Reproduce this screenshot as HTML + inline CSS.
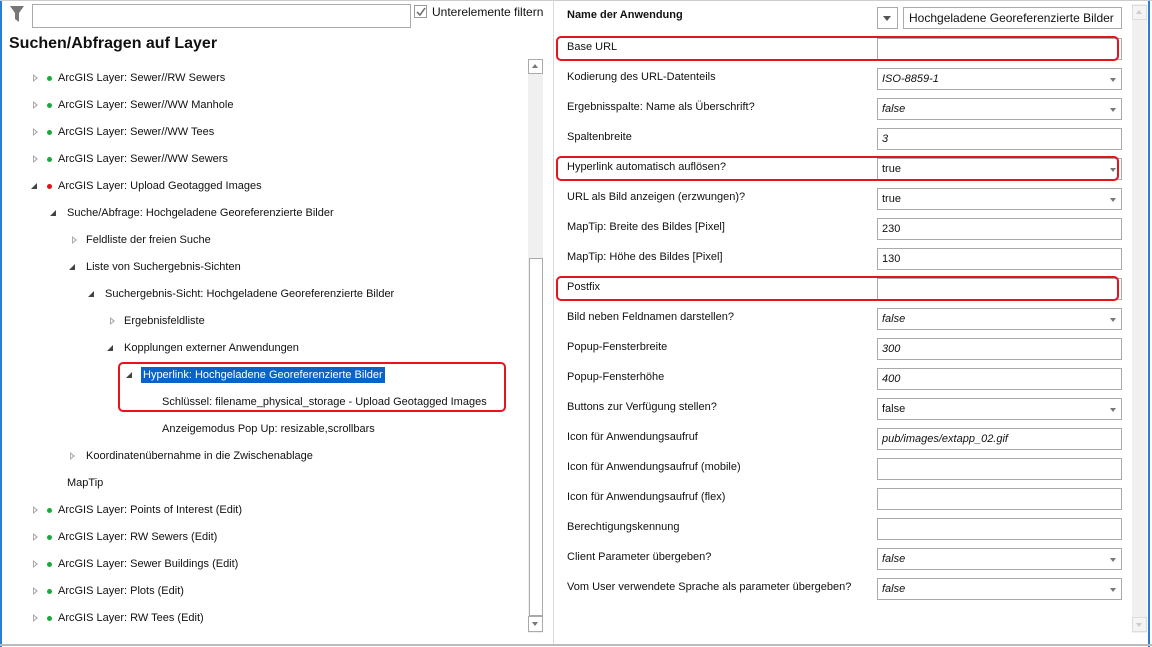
<!DOCTYPE html>
<html><head><meta charset="utf-8"><style>
*{margin:0;padding:0;box-sizing:border-box}
body{width:1152px;height:647px;overflow:hidden;background:#fff;font-family:"Liberation Sans",sans-serif;font-size:11px;color:#111;position:relative}
.a{position:absolute;white-space:nowrap}
.t{position:absolute;white-space:nowrap;line-height:14px}
.ex{position:absolute;width:0;height:0;border-top:4px solid transparent;border-bottom:4px solid transparent;border-left:5px solid #aaa}
.ex:after{content:"";position:absolute;left:-4px;top:-2px;border-top:2px solid transparent;border-bottom:2px solid transparent;border-left:2.5px solid #fff}
.co{position:absolute;width:0;height:0;border-left:6px solid transparent;border-bottom:6px solid #444}
.dot{position:absolute;width:5px;height:5px;border-radius:50%;background:#1aaa3a}
.inp{position:absolute;left:877px;width:245px;height:22px;border:1px solid #aaa;background:#fff;padding:3px 4px;font-size:11px;line-height:14px}
.inp.i{font-style:italic}
.dd:after{content:"";position:absolute;right:5px;top:9px;border-left:3px solid transparent;border-right:3px solid transparent;border-top:4px solid #777}
.lb{position:absolute;left:567px;white-space:nowrap;line-height:14px}
.red{position:absolute;border:2px solid #e8141c;border-radius:5px}
</style></head><body>
<div class="a" style="left:0;top:0;width:2px;height:647px;background:#2a7fd4"></div>
<div class="a" style="left:1148px;top:0;width:2px;height:647px;background:#2a7fd4"></div>
<div class="a" style="left:0;top:0;width:1152px;height:1px;background:#ccc"></div>
<div class="a" style="left:0;top:644px;width:1152px;height:2px;background:#bbb"></div>
<!-- filter -->
<svg class="a" style="left:9px;top:5px" width="16" height="18" viewBox="0 0 16 18"><path d="M1 1H15L10 8V17L6 14V8Z" fill="#777"/></svg>
<div class="a" style="left:32px;top:4px;width:379px;height:24px;border:1px solid #aaa"></div>
<div class="a" style="left:414px;top:5px;width:13px;height:13px;border:1px solid #999;background:#fff"></div>
<svg class="a" style="left:416px;top:7px" width="10" height="10"><path d="M1 5L4 8L9 1" stroke="#666" stroke-width="1.5" fill="none"/></svg>
<div class="t" style="left:432px;top:5px;font-size:12px">Unterelemente filtern</div>
<div class="t" style="left:9px;top:34px;font-size:16px;font-weight:bold;line-height:20px">Suchen/Abfragen auf Layer</div>
<!-- left scrollbar -->
<div class="a" style="left:528px;top:59px;width:15px;height:574px;background:#f0f0f0"></div>
<div class="a" style="left:528px;top:59px;width:15px;height:15px;border:1px solid #aaa;background:#fff"></div>
<div class="a" style="left:532px;top:64px;border-left:3px solid transparent;border-right:3px solid transparent;border-bottom:4px solid #777"></div>
<div class="a" style="left:529px;top:258px;width:14px;height:358px;border:1px solid #aaa;background:#fff"></div>
<div class="a" style="left:528px;top:616px;width:15px;height:16px;border:1px solid #aaa;background:#fff"></div>
<div class="a" style="left:532px;top:622px;border-left:3px solid transparent;border-right:3px solid transparent;border-top:4px solid #777"></div>
<div class="a" style="left:553px;top:0;width:1px;height:644px;background:#d0dbe6"></div>
<!-- tree -->
<div class="ex" style="left:33px;top:74px"></div><div class="dot" style="left:47px;top:76px"></div><div class="t" style="left:58px;top:71px">ArcGIS Layer: Sewer//RW Sewers</div>
<div class="ex" style="left:33px;top:101px"></div><div class="dot" style="left:47px;top:103px"></div><div class="t" style="left:58px;top:98px">ArcGIS Layer: Sewer//WW Manhole</div>
<div class="ex" style="left:33px;top:128px"></div><div class="dot" style="left:47px;top:130px"></div><div class="t" style="left:58px;top:125px">ArcGIS Layer: Sewer//WW Tees</div>
<div class="ex" style="left:33px;top:155px"></div><div class="dot" style="left:47px;top:157px"></div><div class="t" style="left:58px;top:152px">ArcGIS Layer: Sewer//WW Sewers</div>
<div class="co" style="left:31px;top:183px"></div><div class="dot" style="left:47px;top:184px;background:#e81010"></div><div class="t" style="left:58px;top:179px">ArcGIS Layer: Upload Geotagged Images</div>
<div class="co" style="left:50px;top:210px"></div><div class="t" style="left:67px;top:206px">Suche/Abfrage: Hochgeladene Georeferenzierte Bilder</div>
<div class="ex" style="left:72px;top:236px"></div><div class="t" style="left:86px;top:233px">Feldliste der freien Suche</div>
<div class="co" style="left:69px;top:264px"></div><div class="t" style="left:86px;top:260px">Liste von Suchergebnis-Sichten</div>
<div class="co" style="left:88px;top:291px"></div><div class="t" style="left:105px;top:287px">Suchergebnis-Sicht: Hochgeladene Georeferenzierte Bilder</div>
<div class="ex" style="left:110px;top:317px"></div><div class="t" style="left:124px;top:314px">Ergebnisfeldliste</div>
<div class="co" style="left:107px;top:345px"></div><div class="t" style="left:124px;top:341px">Kopplungen externer Anwendungen</div>
<div class="co" style="left:126px;top:372px"></div><div class="t" style="left:141px;top:367px;background:#0a64c8;color:#fff;padding:1px 2px">Hyperlink: Hochgeladene Georeferenzierte Bilder</div>
<div class="t" style="left:162px;top:395px">Schlüssel: filename_physical_storage - Upload Geotagged Images</div>
<div class="t" style="left:162px;top:422px">Anzeigemodus Pop Up: resizable,scrollbars</div>
<div class="ex" style="left:70px;top:452px"></div><div class="t" style="left:86px;top:449px">Koordinatenübernahme in die Zwischenablage</div>
<div class="t" style="left:67px;top:476px">MapTip</div>
<div class="ex" style="left:33px;top:506px"></div><div class="dot" style="left:47px;top:508px"></div><div class="t" style="left:58px;top:503px">ArcGIS Layer: Points of Interest (Edit)</div>
<div class="ex" style="left:33px;top:533px"></div><div class="dot" style="left:47px;top:535px"></div><div class="t" style="left:58px;top:530px">ArcGIS Layer: RW Sewers (Edit)</div>
<div class="ex" style="left:33px;top:560px"></div><div class="dot" style="left:47px;top:562px"></div><div class="t" style="left:58px;top:557px">ArcGIS Layer: Sewer Buildings (Edit)</div>
<div class="ex" style="left:33px;top:587px"></div><div class="dot" style="left:47px;top:589px"></div><div class="t" style="left:58px;top:584px">ArcGIS Layer: Plots (Edit)</div>
<div class="ex" style="left:33px;top:614px"></div><div class="dot" style="left:47px;top:616px"></div><div class="t" style="left:58px;top:611px">ArcGIS Layer: RW Tees (Edit)</div>
<div class="red" style="left:118px;top:362px;width:388px;height:50px"></div>
<!-- right scrollbar -->
<div class="a" style="left:1132px;top:4px;width:15px;height:629px;background:#f0f0f0"></div>
<div class="a" style="left:1132px;top:5px;width:15px;height:15px;border:1px solid #ddd;background:#f4f4f4"></div>
<div class="a" style="left:1136px;top:10px;border-left:3px solid transparent;border-right:3px solid transparent;border-bottom:4px solid #ccc"></div>
<div class="a" style="left:1132px;top:617px;width:15px;height:15px;border:1px solid #ddd;background:#f4f4f4"></div>
<div class="a" style="left:1136px;top:623px;border-left:3px solid transparent;border-right:3px solid transparent;border-top:4px solid #ccc"></div>
<!-- properties -->
<div class="lb" style="top:8px;font-weight:bold">Name der Anwendung</div>
<div class="a" style="left:877px;top:7px;width:21px;height:22px;border:1px solid #aaa"></div>
<div class="a" style="left:883px;top:16px;border-left:4px solid transparent;border-right:4px solid transparent;border-top:5px solid #555"></div>
<div class="a" style="left:903px;top:7px;width:219px;height:22px;border:1px solid #aaa;padding:3px 5px;font-size:12px;line-height:14px">Hochgeladene Georeferenzierte Bilder</div>

<div class="lb" style="top:40px">Base URL</div><div class="inp" style="top:38px"></div>
<div class="lb" style="top:70px">Kodierung des URL-Datenteils</div><div class="inp i dd" style="top:68px">ISO-8859-1</div>
<div class="lb" style="top:100px">Ergebnisspalte: Name als Überschrift?</div><div class="inp i dd" style="top:98px">false</div>
<div class="lb" style="top:130px">Spaltenbreite</div><div class="inp i" style="top:128px">3</div>
<div class="lb" style="top:160px">Hyperlink automatisch auflösen?</div><div class="inp dd" style="top:158px">true</div>
<div class="lb" style="top:190px">URL als Bild anzeigen (erzwungen)?</div><div class="inp dd" style="top:188px">true</div>
<div class="lb" style="top:220px">MapTip: Breite des Bildes [Pixel]</div><div class="inp" style="top:218px">230</div>
<div class="lb" style="top:250px">MapTip: Höhe des Bildes [Pixel]</div><div class="inp" style="top:248px">130</div>
<div class="lb" style="top:280px">Postfix</div><div class="inp" style="top:278px"></div>
<div class="lb" style="top:310px">Bild neben Feldnamen darstellen?</div><div class="inp i dd" style="top:308px">false</div>
<div class="lb" style="top:340px">Popup-Fensterbreite</div><div class="inp i" style="top:338px">300</div>
<div class="lb" style="top:370px">Popup-Fensterhöhe</div><div class="inp i" style="top:368px">400</div>
<div class="lb" style="top:400px">Buttons zur Verfügung stellen?</div><div class="inp dd" style="top:398px">false</div>
<div class="lb" style="top:430px">Icon für Anwendungsaufruf</div><div class="inp i" style="top:428px">pub/images/extapp_02.gif</div>
<div class="lb" style="top:460px">Icon für Anwendungsaufruf (mobile)</div><div class="inp" style="top:458px"></div>
<div class="lb" style="top:490px">Icon für Anwendungsaufruf (flex)</div><div class="inp" style="top:488px"></div>
<div class="lb" style="top:520px">Berechtigungskennung</div><div class="inp" style="top:518px"></div>
<div class="lb" style="top:550px">Client Parameter übergeben?</div><div class="inp i dd" style="top:548px">false</div>
<div class="lb" style="top:580px">Vom User verwendete Sprache als parameter übergeben?</div><div class="inp i dd" style="top:578px">false</div>

<div class="red" style="left:556px;top:36px;width:563px;height:25px"></div>
<div class="red" style="left:556px;top:156px;width:563px;height:25px"></div>
<div class="red" style="left:556px;top:276px;width:563px;height:25px"></div>
</body></html>
